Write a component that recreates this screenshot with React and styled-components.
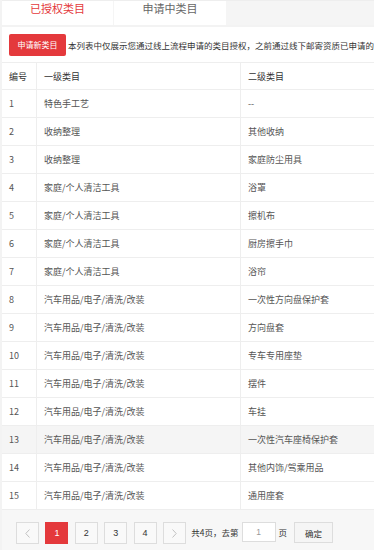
import React from 'react';
import styled, { createGlobalStyle } from 'styled-components';

const GlobalStyle = createGlobalStyle`
  html, body {
    margin: 0;
    padding: 0;
    background: #f3f3f3;
    overflow: hidden;
  }
  body {
    font-family: "Noto Sans CJK SC", "Liberation Sans", sans-serif;
    font-size: 9px;
    color: #333;
  }
`;

const Page = styled.div`
  padding-left: 2px;
  width: 640px;
`;

const Tabs = styled.div`
  display: flex;
  gap: 1px;
  height: 25px;
  margin-bottom: 2px;
  background: #f5f5f5;
  border-top: 1px solid #eee;
  box-sizing: border-box;
`;

const Tab = styled.div`
  width: ${p => p.$w}px;
  background: #fff;
  text-align: center;
  font-size: 11px;
  line-height: 15px;
  color: ${p => (p.$active ? '#e4393c' : '#666')};
`;

const Panel = styled.div`
  background: #fff;
`;

const Toolbar = styled.div`
  display: flex;
  align-items: center;
  gap: 2px;
  height: 35px;
  padding-left: 7px;
  border-bottom: 1px solid #eee;
  white-space: nowrap;
  overflow: hidden;
`;

const RedButton = styled.button`
  width: 57px;
  height: 22px;
  padding: 0;
  background: #e4393c;
  color: #fff;
  border: none;
  border-radius: 2px;
  font-family: inherit;
  font-size: 8px;
  line-height: 22px;
  cursor: pointer;
`;

const Notice = styled.span`
  font-size: 8.5px;
  color: #333;
`;

const Table = styled.table`
  width: 100%;
  border-collapse: collapse;
  table-layout: fixed;
`;

const Th = styled.th`
  width: ${p => (p.$w ? `${p.$w}px` : 'auto')};
  height: 26px;
  padding: 0 0 0 7px;
  text-align: left;
  font-weight: 400;
  font-size: 9px;
  color: #333;
  border-bottom: 1px solid #eee;
  border-right: 1px solid #eee;
`;

const Tr = styled.tr`
  background: ${p => (p.$hover ? '#f5f5f5' : '#fff')};
`;

const Td = styled.td`
  height: 27px;
  padding: 0 0 0 7px;
  font-size: 9px;
  color: #555;
  border-bottom: 1px solid #eee;
  border-right: 1px solid #eee;
  white-space: nowrap;
`;

const Pager = styled.div`
  display: flex;
  align-items: flex-start;
  height: 60px;
  padding: 12px 0 0 14px;
  background: #f7f7f7;
  box-sizing: border-box;
`;

const PageBtn = styled.div`
  width: 23px;
  height: 22px;
  box-sizing: border-box;
  margin-right: 6.4px;
  display: flex;
  align-items: center;
  justify-content: center;
  border: 1px solid ${p => (p.$active ? '#e4393c' : '#ddd')};
  background: ${p => (p.$active ? '#e4393c' : '#f9f9f9')};
  color: ${p => (p.$active ? '#fff' : '#333')};
  font-family: "Liberation Sans", sans-serif;
  font-size: 9px;
`;

const PagerText = styled.span`
  margin: 0 3px 0 ${p => p.$ml || -1}px;
  line-height: 21px;
  font-size: 8.5px;
  color: #333;
`;

const PageInput = styled.div`
  width: 34px;
  height: 20px;
  box-sizing: border-box;
  border: 1px solid #ddd;
  background: #fff;
  color: #999;
  font-family: "Liberation Sans", sans-serif;
  font-size: 8.5px;
  display: flex;
  align-items: center;
  justify-content: center;
`;

const ConfirmBtn = styled.div`
  margin-left: 4px;
  width: 39px;
  height: 21px;
  box-sizing: border-box;
  border: 1px solid #ddd;
  background: #f5f5f5;
  color: #333;
  font-size: 8.5px;
  display: flex;
  align-items: center;
  justify-content: center;
`;

const Chevron = ({ dir }) => (
  <svg width="5" height="9" viewBox="0 0 5 9">
    <path
      d={dir === 'left' ? 'M4.5 0.5 L0.8 4.5 L4.5 8.5' : 'M0.5 0.5 L4.2 4.5 L0.5 8.5'}
      fill="none"
      stroke="#bbb"
      strokeWidth="0.9"
    />
  </svg>
);

const CAR = '汽车用品/电子/清洗/改装';
const HOME = '家庭/个人清洁工具';

const rows = [
  ['特色手工艺', '--'],
  ['收纳整理', '其他收纳'],
  ['收纳整理', '家庭防尘用具'],
  [HOME, '浴罩'],
  [HOME, '擦机布'],
  [HOME, '厨房擦手巾'],
  [HOME, '浴帘'],
  [CAR, '一次性方向盘保护套'],
  [CAR, '方向盘套'],
  [CAR, '专车专用座垫'],
  [CAR, '摆件'],
  [CAR, '车挂'],
  [CAR, '一次性汽车座椅保护套'],
  [CAR, '其他内饰/驾乘用品'],
  [CAR, '通用座套'],
];

export default function App() {
  return (
    <Page>
      <GlobalStyle />
      <Tabs>
        <Tab $w={111} $active>已授权类目</Tab>
        <Tab $w={112}>申请中类目</Tab>
      </Tabs>
      <Panel>
        <Toolbar>
          <RedButton>申请新类目</RedButton>
          <Notice>本列表中仅展示您通过线上流程申请的类目授权，之前通过线下邮寄资质已申请的类目授权不在此展示</Notice>
        </Toolbar>
        <Table>
          <thead>
            <tr>
              <Th $w={27}>编号</Th>
              <Th $w={196}>一级类目</Th>
              <Th>二级类目</Th>
            </tr>
          </thead>
          <tbody>
            {rows.map((r, i) => (
              <Tr key={i} $hover={i === 12}>
                <Td>{i + 1}</Td>
                <Td>{r[0]}</Td>
                <Td>{r[1]}</Td>
              </Tr>
            ))}
          </tbody>
        </Table>
        <Pager>
          <PageBtn><Chevron dir="left" /></PageBtn>
          <PageBtn $active>1</PageBtn>
          <PageBtn>2</PageBtn>
          <PageBtn>3</PageBtn>
          <PageBtn>4</PageBtn>
          <PageBtn><Chevron dir="right" /></PageBtn>
          <PagerText>共4页，去第</PagerText>
          <PageInput>1</PageInput>
          <PagerText $ml={3}>页</PagerText>
          <ConfirmBtn>确定</ConfirmBtn>
        </Pager>
      </Panel>
    </Page>
  );
}
